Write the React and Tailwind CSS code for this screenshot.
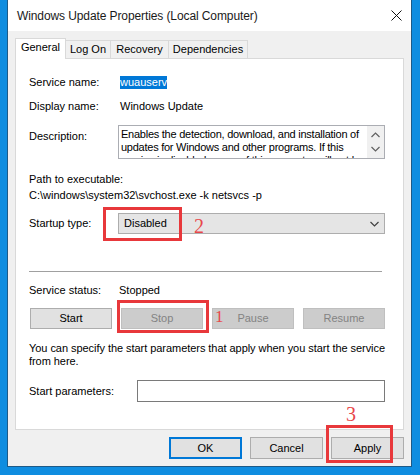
import React from "react";

const font = { fontFamily: '"Liberation Sans", Arial, sans-serif' };

function Btn({ children, disabled, className = "" }) {
  return (
    <div
      className={
        "h-[21px] flex items-center justify-center border text-[11px] " +
        (disabled
          ? "bg-[#cccccc] border-[#bfbfbf] text-[#838383] "
          : "bg-[#e1e1e1] border-[#adadad] text-black ") +
        className
      }
    >
      {children}
    </div>
  );
}

function ChevronUp() {
  return (
    <svg width="9" height="6" viewBox="0 0 9 6">
      <path d="M0.5 5 L4.5 1 L8.5 5" fill="none" stroke="#606060" strokeWidth="1.2" />
    </svg>
  );
}
function ChevronDown({ color = "#606060" }) {
  return (
    <svg width="9" height="6" viewBox="0 0 9 6">
      <path d="M0.5 1 L4.5 5 L8.5 1" fill="none" stroke={color} strokeWidth="1.2" />
    </svg>
  );
}

export default function App() {
  return (
    <div
      className="relative w-[420px] h-[475px] overflow-hidden bg-[#0f8de0] pl-[7px]"
      style={font}
    >
      {/* Window */}
      <div className="w-[405px] h-[467px] flex flex-col border-x border-b border-[#1d5a87] bg-[#f0f0f0] text-[11px] text-black">
        {/* Title bar */}
        <div className="h-[31px] bg-white flex items-center justify-between pl-[9px] pr-[9px] shrink-0">
          <span className="text-[12px] text-[#1a1a1a] tracking-[-0.1px]">
            Windows Update Properties (Local Computer)
          </span>
          <svg width="11" height="11" viewBox="0 0 11 11">
            <path d="M0.5 0.5 L10.5 10.5 M10.5 0.5 L0.5 10.5" stroke="#111" strokeWidth="1" />
          </svg>
        </div>

        {/* Body */}
        <div className="flex-1 flex flex-col px-[7px] pt-[7px]">
          {/* Tabs */}
          <div className="flex items-end h-[20px] relative z-10">
            <div className="h-[21px] w-[51px] -mb-px bg-white border border-b-0 border-[#d9d9d9] flex items-center justify-center pb-[3px]">
              General
            </div>
            <div className="h-[18px] w-[46px] -ml-px bg-[#f0f0f0] border border-b-0 border-[#d9d9d9] flex items-center justify-center">
              Log On
            </div>
            <div className="h-[18px] w-[59px] -ml-px bg-[#f0f0f0] border border-b-0 border-[#d9d9d9] flex items-center justify-center">
              Recovery
            </div>
            <div className="h-[18px] w-[80px] -ml-px bg-[#f0f0f0] border border-b-0 border-[#d9d9d9] flex items-center justify-center">
              Dependencies
            </div>
          </div>

          {/* Panel */}
          <div className="h-[372px] bg-white border border-[#d9d9d9] flex flex-col pl-[13px] pr-[18px]">
            {/* Service name */}
            <div className="flex items-center h-[14px] mt-[16px]">
              <div className="w-[91px]">Service name:</div>
              <span className="bg-[#0078d7] text-white h-[13px] leading-[13px]">wuauserv</span>
            </div>
            {/* Display name */}
            <div className="flex items-center h-[14px] mt-[10px]">
              <div className="w-[91px]">Display name:</div>
              <div>Windows Update</div>
            </div>
            {/* Description */}
            <div className="flex mt-[12px]">
              <div className="w-[89px] pt-[4px] leading-[14px]">Description:</div>
              <div className="w-[267px] h-[34px] border border-[#abadb3] flex overflow-hidden">
                <div className="flex-1 pl-[2px] pt-[2px] leading-[13px] overflow-hidden whitespace-nowrap tracking-[-0.25px]">
                  Enables the detection, download, and installation of
                  <br />
                  updates for Windows and other programs. If this
                  <br />
                  service is disabled, users of this computer will not be
                </div>
                <div className="w-[17px] shrink-0 bg-[#f0f0f0] flex flex-col items-center justify-between py-[6px]">
                  <ChevronUp />
                  <ChevronDown />
                </div>
              </div>
            </div>
            {/* Path */}
            <div className="h-[14px] leading-[14px] mt-[13px]">Path to executable:</div>
            <div className="h-[14px] leading-[14px] mt-[2px]">
              C:\windows\system32\svchost.exe -k netsvcs -p
            </div>
            {/* Startup type */}
            <div className="flex items-center mt-[11px]">
              <div className="w-[89px]">Startup type:</div>
              <div className="w-[267px] h-[21px] bg-[#e5e5e5] border border-[#adadad] flex items-center justify-between pl-[5px] pr-[5px]">
                <span>Disabled</span>
                <ChevronDown color="#404040" />
              </div>
            </div>
            {/* Separator */}
            <div className="h-px bg-[#a0a0a0] mt-[37px] w-[353px]" />
            {/* Service status */}
            <div className="flex items-center h-[14px] mt-[11px]">
              <div className="w-[90px]">Service status:</div>
              <div>Stopped</div>
            </div>
            {/* Buttons */}
            <div className="flex justify-between w-[355px] ml-[1px] mt-[11px]">
              <Btn className="w-[82px]">Start</Btn>
              <Btn disabled className="w-[82px]">Stop</Btn>
              <Btn disabled className="w-[82px]">Pause</Btn>
              <Btn disabled className="w-[82px]">Resume</Btn>
            </div>
            {/* Info text */}
            <div className="mt-[13px] leading-[12.5px] whitespace-nowrap tracking-[-0.05px]">
              You can specify the start parameters that apply when you start the service
              <br />
              from here.
            </div>
            {/* Start parameters */}
            <div className="flex items-center mt-[13px]">
              <div className="w-[108px]">Start parameters:</div>
              <div className="w-[249px] h-[22px] border border-[#7a7a7a] bg-white" />
            </div>
          </div>

          {/* Bottom buttons */}
          <div className="flex justify-end gap-[8px] mt-[7px]">
            <div className="w-[73px] h-[22px] flex items-center justify-center bg-[#e1e1e1] border-2 border-[#0078d7]">
              OK
            </div>
            <Btn className="w-[73px] h-[22px]">Cancel</Btn>
            <Btn className="w-[73px] h-[22px]">Apply</Btn>
          </div>
        </div>
      </div>

      {/* Annotations */}
      <div className="absolute left-[103px] top-[207px] w-[79px] h-[34px] border-[3px] border-[#e8383b]" />
      <div
        className="absolute left-[194px] top-[216px] text-[20px] leading-[20px] text-[#e8474a]"
        style={{ fontFamily: '"Liberation Serif", "Times New Roman", serif' }}
      >
        2
      </div>
      <div className="absolute left-[117px] top-[300px] w-[92px] h-[33px] border-[3px] border-[#e8383b]" />
      <div
        className="absolute left-[215px] top-[308px] text-[17px] leading-[17px] text-[#e8474a]"
        style={{ fontFamily: '"Liberation Serif", "Times New Roman", serif' }}
      >
        1
      </div>
      <div className="absolute left-[326px] top-[425px] w-[67px] h-[38px] border-[3px] border-[#e8383b]" />
      <div
        className="absolute left-[346px] top-[404px] text-[20px] leading-[20px] text-[#e8474a]"
        style={{ fontFamily: '"Liberation Serif", "Times New Roman", serif' }}
      >
        3
      </div>
    </div>
  );
}
